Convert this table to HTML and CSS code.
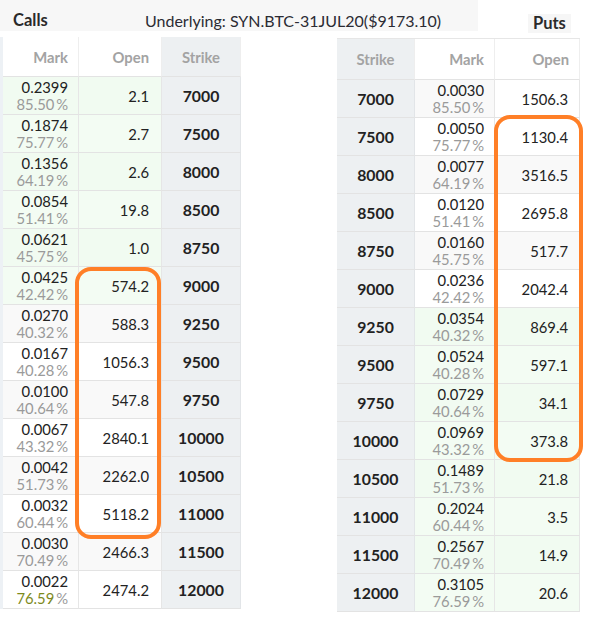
FILE: index.html
```html
<!DOCTYPE html>
<html>
<head>
<meta charset="utf-8">
<link rel="stylesheet" href="styles.css">
</head>
<body>
<div class="page">
  <div class="topbar">
    <div class="calls-area">
      <span class="calls-title">Calls</span>
      <span class="underlying">Underlying: SYN.BTC-31JUL20($9173.10)</span>
    </div>
    <div class="puts-area"><span class="puts-title">Puts</span></div>
  </div>
  <div class="tables">
    <div class="grid calls">
      <div class="hd num">Mark</div><div class="hd num">Open</div><div class="hd strike">Strike</div>
      <div class="c itm mark"><span>0.2399</span><span class="iv">85.50&thinsp;%</span></div><div class="c itm num">2.1</div><div class="c strike">7000</div>
      <div class="c itm alt mark"><span>0.1874</span><span class="iv">75.77&thinsp;%</span></div><div class="c itm alt num">2.7</div><div class="c strike">7500</div>
      <div class="c itm mark"><span>0.1356</span><span class="iv">64.19&thinsp;%</span></div><div class="c itm num">2.6</div><div class="c strike">8000</div>
      <div class="c itm alt mark"><span>0.0854</span><span class="iv">51.41&thinsp;%</span></div><div class="c itm alt num">19.8</div><div class="c strike">8500</div>
      <div class="c itm mark"><span>0.0621</span><span class="iv">45.75&thinsp;%</span></div><div class="c itm num">1.0</div><div class="c strike">8750</div>
      <div class="c itm alt mark"><span>0.0425</span><span class="iv">42.42&thinsp;%</span></div><div class="c itm alt num">574.2</div><div class="c strike">9000</div>
      <div class="c otm gray mark"><span>0.0270</span><span class="iv">40.32&thinsp;%</span></div><div class="c otm gray num">588.3</div><div class="c strike">9250</div>
      <div class="c otm mark"><span>0.0167</span><span class="iv">40.28&thinsp;%</span></div><div class="c otm num">1056.3</div><div class="c strike">9500</div>
      <div class="c otm gray mark"><span>0.0100</span><span class="iv">40.64&thinsp;%</span></div><div class="c otm gray num">547.8</div><div class="c strike">9750</div>
      <div class="c otm mark"><span>0.0067</span><span class="iv">43.32&thinsp;%</span></div><div class="c otm num">2840.1</div><div class="c strike">10000</div>
      <div class="c otm gray mark"><span>0.0042</span><span class="iv">51.73&thinsp;%</span></div><div class="c otm gray num">2262.0</div><div class="c strike">10500</div>
      <div class="c otm mark"><span>0.0032</span><span class="iv">60.44&thinsp;%</span></div><div class="c otm num">5118.2</div><div class="c strike">11000</div>
      <div class="c otm gray mark"><span>0.0030</span><span class="iv">70.49&thinsp;%</span></div><div class="c otm gray num">2466.3</div><div class="c strike">11500</div>
      <div class="c otm mark"><span>0.0022</span><span class="iv"><span class="olive">76.59</span>&thinsp;%</span></div><div class="c otm num">2474.2</div><div class="c strike">12000</div>
    </div>
    <div class="grid puts">
      <div class="hd strike">Strike</div><div class="hd num">Mark</div><div class="hd num">Open</div>
      <div class="c strike">7000</div><div class="c otm gray mark"><span>0.0030</span><span class="iv">85.50&thinsp;%</span></div><div class="c otm num">1506.3</div>
      <div class="c strike">7500</div><div class="c otm mark"><span>0.0050</span><span class="iv">75.77&thinsp;%</span></div><div class="c otm num">1130.4</div>
      <div class="c strike">8000</div><div class="c otm gray mark"><span>0.0077</span><span class="iv">64.19&thinsp;%</span></div><div class="c otm gray num">3516.5</div>
      <div class="c strike">8500</div><div class="c otm mark"><span>0.0120</span><span class="iv">51.41&thinsp;%</span></div><div class="c otm num">2695.8</div>
      <div class="c strike">8750</div><div class="c otm gray mark"><span>0.0160</span><span class="iv">45.75&thinsp;%</span></div><div class="c otm gray num">517.7</div>
      <div class="c strike">9000</div><div class="c otm mark"><span>0.0236</span><span class="iv">42.42&thinsp;%</span></div><div class="c otm num">2042.4</div>
      <div class="c strike">9250</div><div class="c itm mark"><span>0.0354</span><span class="iv">40.32&thinsp;%</span></div><div class="c itm num">869.4</div>
      <div class="c strike">9500</div><div class="c itm alt mark"><span>0.0524</span><span class="iv">40.28&thinsp;%</span></div><div class="c itm alt num">597.1</div>
      <div class="c strike">9750</div><div class="c itm mark"><span>0.0729</span><span class="iv">40.64&thinsp;%</span></div><div class="c itm num">34.1</div>
      <div class="c strike">10000</div><div class="c itm alt mark"><span>0.0969</span><span class="iv">43.32&thinsp;%</span></div><div class="c itm alt num">373.8</div>
      <div class="c strike">10500</div><div class="c itm mark"><span>0.1489</span><span class="iv">51.73&thinsp;%</span></div><div class="c itm num">21.8</div>
      <div class="c strike">11000</div><div class="c itm alt mark"><span>0.2024</span><span class="iv">60.44&thinsp;%</span></div><div class="c itm alt num">3.5</div>
      <div class="c strike">11500</div><div class="c itm mark"><span>0.2567</span><span class="iv">70.49&thinsp;%</span></div><div class="c itm num">14.9</div>
      <div class="c strike">12000</div><div class="c itm alt mark"><span>0.3105</span><span class="iv">76.59&thinsp;%</span></div><div class="c itm alt num">20.6</div>
    </div>
  </div>
  <div class="hl hl-calls"></div>
  <div class="hl hl-puts"></div>
</div>
</body>
</html>
```

FILE: styles.css
```css
html, body {
  margin: 0;
  padding: 0;
  background: #ffffff;
}
.page {
  position: relative;
  width: 592px;
  height: 623px;
  overflow: hidden;
  font-family: "Lato", "Open Sans", sans-serif;
  color: #222;
}
.topbar {
  display: flex;
  height: 31px;
}
.calls-area {
  width: 478px;
  background: #f7f7f7;
  display: flex;
  align-items: center;
  padding-left: 13px;
  padding-top: 9px;
  box-sizing: border-box;
  font-size: 16px;
}
.calls-title {
  width: 132px;
  font-weight: 700;
  font-size: 16.5px;
  color: #2a2a2a;
}
.underlying {
  color: #2b2b33;
}
.puts-area {
  flex: 1;
  margin-top: 5px;
  height: 32px;
  background: #ffffff;
  padding-left: 50px;
  padding-top: 8px;
  box-sizing: border-box;
}
.puts-title {
  display: inline-block;
  background: #f6f6f6;
  padding: 0 5px;
  font-weight: 700;
  font-size: 16.5px;
  line-height: 19px;
  color: #2a2a2a;
}
.tables {
  display: flex;
  align-items: flex-start;
}
.grid {
  display: grid;
  font-size: 14.8px;
}
.calls {
  margin-top: 6px;
  border-left: 3px solid #edf1f5;
  grid-template-columns: 76px 83px 79px;
  grid-template-rows: 40px repeat(14, 38px);
}
.puts {
  margin-top: 7px;
  margin-left: 96px;
  grid-template-columns: 78px 80px 85px;
  grid-template-rows: 41px repeat(14, 38px);
  border-top: 1px solid #e6e6e6;
}
.hd {
  display: flex;
  align-items: center;
  font-weight: 700;
  color: #a3a3a3;
  box-sizing: border-box;
  border-right: 1px solid #eeeeee;
  border-bottom: 1px solid #e3e3e3;
}
.hd.num {
  justify-content: flex-end;
  padding-right: 10px;
}
.calls .hd.num:nth-child(2) {
  padding-right: 12px;
}
.hd.strike {
  justify-content: center;
  background: #edf0f2;
}
.c {
  box-sizing: border-box;
  border-bottom: 1px solid #e3e3e3;
  border-right: 1px solid #e6e6e6;
  display: flex;
  align-items: center;
}
.c.num {
  justify-content: flex-end;
  padding-right: 12px;
}
.puts .c.num {
  padding-right: 11px;
}
.c.mark {
  flex-direction: column;
  align-items: flex-end;
  justify-content: center;
  padding-right: 10px;
  line-height: 17.5px;
  padding-top: 1px;
}
.c.strike {
  justify-content: center;
  background: #edf0f2;
  font-weight: 700;
  font-size: 15.8px;
  color: #222;
  border-right: 1px solid #e2e5e8;
}
.iv {
  color: #9a9a9a;
}
.olive {
  color: #7d8a1c;
}
.itm {
  background: #f1fbf1;
}
.itm.alt {
  background: #f3fcf3;
}
.otm {
  background: #ffffff;
}
.otm.gray {
  background: #f9f9f9;
}
.hl {
  position: absolute;
  border: 4px solid #ff7f27;
  border-radius: 16px;
  box-sizing: border-box;
}
.hl-calls {
  left: 75px;
  top: 267px;
  width: 86px;
  height: 272px;
}
.hl-puts {
  left: 494px;
  top: 115px;
  width: 89px;
  height: 347px;
}
```
